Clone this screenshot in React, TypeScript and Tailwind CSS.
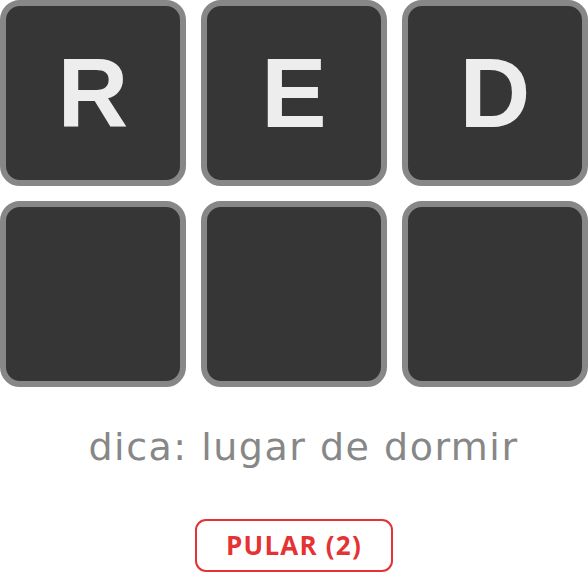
import React from 'react';

const rows = [['R', 'E', 'D'], ['', '', '']];

function Tile({ letter }: { letter: string }) {
  return (
    <div className="h-[186px] rounded-[20px] border-[6px] border-[#878787] bg-[#363636] flex items-center justify-center">
      <span className="text-[98px] leading-none font-bold text-[#ededed] font-['Liberation_Sans',Arial,sans-serif]">
        {letter}
      </span>
    </div>
  );
}

export default function App() {
  return (
    <div className="w-[588px] h-[574px] bg-white flex flex-col items-center overflow-hidden">
      <div className="w-full grid grid-cols-3 gap-x-[15px] gap-y-[15px]">
        {rows.flat().map((l, i) => (
          <Tile key={i} letter={l} />
        ))}
      </div>
      <p className="mt-[36px] pl-[19px] text-[38px] leading-[48px] tracking-[1.5px] text-[#878787] font-['DejaVu_Sans',sans-serif]">
        dica: lugar de dormir
      </p>
      <button className="mt-[48px] w-[198px] h-[53px] rounded-[11px] border-2 border-[#e53232] text-[#e53232] text-[26px] font-bold font-['Open_Sans',sans-serif] tracking-[1.2px]">
        PULAR (2)
      </button>
    </div>
  );
}
